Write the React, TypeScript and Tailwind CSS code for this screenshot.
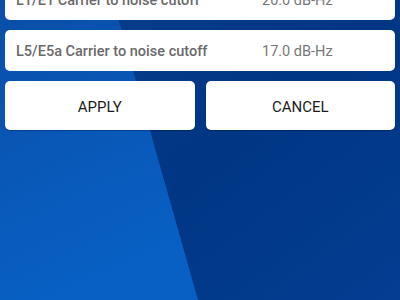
const ROWS = [
  { label: "L1/E1 Carrier to noise cutoff", value: "20.0 dB-Hz" },
  { label: "L5/E5a Carrier to noise cutoff", value: "17.0 dB-Hz" },
];

function Backdrop() {
  return (
    <svg
      className="absolute inset-0 w-full h-full"
      viewBox="0 0 400 300"
      preserveAspectRatio="none"
    >
      <defs>
        <linearGradient id="dark" x1="0" y1="0" x2="1" y2="1">
          <stop offset="0" stopColor="#0a3f8e" />
          <stop offset="0.5" stopColor="#003683" />
          <stop offset="1" stopColor="#043d92" />
        </linearGradient>
        <linearGradient id="light" x1="0" y1="0" x2="0.3" y2="1">
          <stop offset="0" stopColor="#0a4ea8" />
          <stop offset="1" stopColor="#0860c4" />
        </linearGradient>
      </defs>
      <rect x="0" y="0" width="400" height="300" fill="url(#dark)" />
      <polygon points="0,0 113,0 198,300 0,300" fill="url(#light)" />
    </svg>
  );
}

export default function App() {
  return (
    <div className="relative w-[400px] h-[300px] overflow-hidden font-['Roboto',sans-serif]">
      <Backdrop />
      <div className="relative flex flex-col px-[5px]">
        {/* setting rows */}
        <div className="flex flex-col gap-[10px] -mt-[21px]">
          {ROWS.map((r) => (
            <div
              key={r.label}
              className="flex items-center h-[41px] rounded-[5px] bg-white px-[11px] pt-[2px]"
            >
              <span className="w-[246px] text-[14.5px] font-medium text-[#6a6a6a]">{r.label}</span>
              <span className="text-[14.5px] text-[#777777]">{r.value}</span>
            </div>
          ))}
        </div>

        {/* actions */}
        <div className="flex gap-[11px] mt-[10px]">
          {["APPLY", "CANCEL"].map((b) => (
            <button
              key={b}
              className="flex-1 h-[49px] rounded-[5px] bg-white pt-[3px] text-[15px] text-[#1c1c1c] shadow-[0_1px_1px_rgba(0,0,0,0.25)]"
            >
              {b}
            </button>
          ))}
        </div>
      </div>
    </div>
  );
}
